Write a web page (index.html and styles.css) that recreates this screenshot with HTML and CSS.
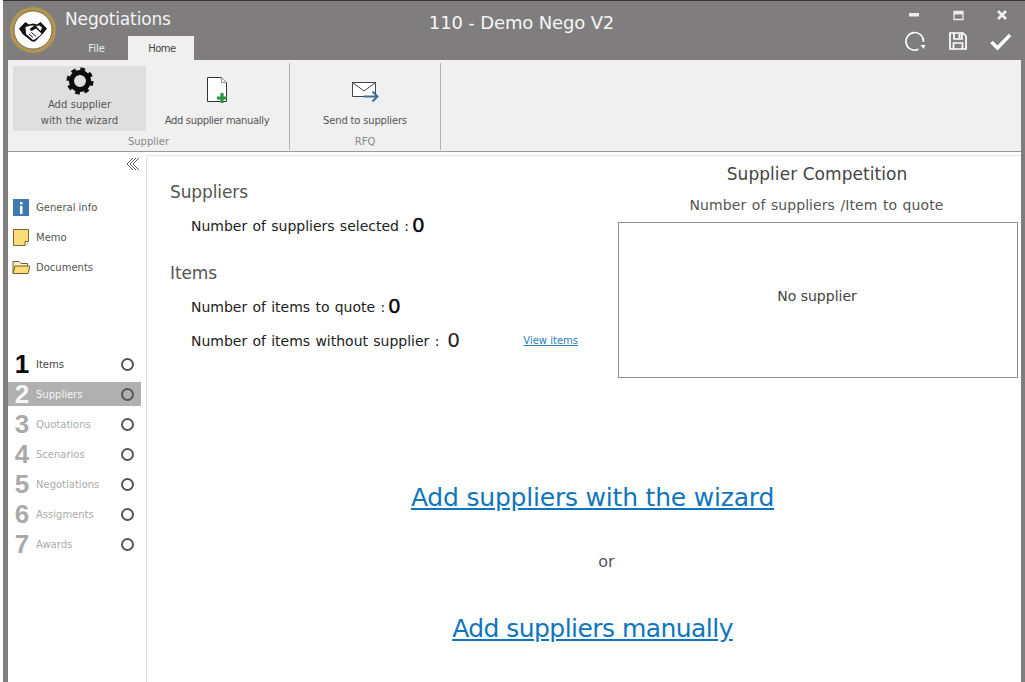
FILE: index.html
```html
<!DOCTYPE html>
<html lang="en">
<head>
<meta charset="utf-8">
<title>Negotiations</title>
<link rel="stylesheet" href="styles.css">
</head>
<body>
<div class="window">
  <header class="titlebar">
    <svg class="logo" width="46" height="46" viewBox="0 0 46 46">
      <circle cx="23" cy="23" r="21" fill="#fff" stroke="#b2964f" stroke-width="4"/>
      <circle cx="23" cy="23" r="19" fill="none" stroke="#4a4538" stroke-width=".7"/>
      <path d="M9 21.500L15.500 15l3.500 2.500 4-1 4 1 3.500-2.500L37 21.500 33.500 26 25 34.500h-3L12.500 27z" fill="#111"/>
      <path d="M15.500 20l5.500-1.500 3.500 0-5 3.500 2 2 4.500-2.500 5.500 5-1.500 2-5.500 4-1.500.500-7-6z" fill="#fff"/>
      <path d="M26 19l3.500-.500 2.500 2-1.500 3.500z" fill="#fff"/>
      <path d="M19 27l4 3.500M21.500 25.500l4.500 4" stroke="#111" stroke-width="1" fill="none"/>
    </svg>
    <div class="brand">
      <div class="app-name">Negotiations</div>
      <nav class="tabs">
        <span class="tab">File</span>
        <span class="tab tab-active">Home</span>
      </nav>
    </div>
    <div class="doc-title">110 - Demo Nego V2</div>
    <div class="controls">
      <div class="control-row">
        <svg width="14" height="14" viewBox="0 0 14 14"><rect x="2" y="5" width="10" height="3.500" fill="#eceaf2"/></svg>
        <svg width="14" height="14" viewBox="0 0 14 14"><path d="M3 3.500h9v8H3z" fill="none" stroke="#eceaf2" stroke-width="1.300"/><rect x="3" y="3" width="9" height="3.500" fill="#eceaf2"/></svg>
        <svg width="14" height="14" viewBox="0 0 14 14"><path d="M3 3l8 8M11 3l-8 8" stroke="#f2f2f2" stroke-width="2.600" fill="none"/></svg>
      </div>
      <div class="control-row action-row">
        <svg width="22" height="22" viewBox="0 0 22 22"><path d="M14.500 19.300A8.800 8.800 0 1 1 19.500 12" fill="none" stroke="#fff" stroke-width="1.600"/><path d="M16.500 15h5l-2 4z" fill="#fff"/></svg>
        <svg width="22" height="22" viewBox="0 0 22 22"><path d="M3 3h13l3 3v13H3z" fill="none" stroke="#fff" stroke-width="1.700"/><path d="M7 3v6h8V3M6.500 19v-6h9v6" fill="none" stroke="#fff" stroke-width="1.700"/><rect x="11.500" y="4" width="2" height="4" fill="#fff"/></svg>
        <svg width="22" height="22" viewBox="0 0 22 22"><path d="M1.500 12l6 6L20 5" fill="none" stroke="#fff" stroke-width="3.400"/></svg>
      </div>
    </div>
  </header>

  <section class="ribbon">
    <div class="group group-supplier">
      <div class="group-buttons">
        <div class="rbtn rbtn-active rbtn-wizard">
          <svg width="28" height="28" viewBox="0 0 28 28">
            <circle cx="14" cy="14" r="8.500" fill="none" stroke="#0c0c0c" stroke-width="5"/>
            <circle cx="14" cy="14" r="11.700" fill="none" stroke="#0c0c0c" stroke-width="3.600" stroke-dasharray="4.600 4.590"/>
          </svg>
          <span>Add supplier<br>with the wizard</span>
        </div>
        <div class="rbtn rbtn-manual">
          <svg width="26" height="30" viewBox="0 0 26 30">
            <path d="M3.500 2.500h14l5 5v19h-19z" fill="#fff" stroke="#333" stroke-width="1"/>
            <path d="M17.500 2.500v5h5" fill="#eee" stroke="#999" stroke-width="1"/>
            <path d="M18 18v10M13 23h10" stroke="#2b9445" stroke-width="3.200"/>
          </svg>
          <span>Add supplier manually</span>
        </div>
      </div>
      <div class="group-label">Supplier</div>
    </div>
    <div class="group group-rfq">
      <div class="group-buttons">
        <div class="rbtn rbtn-send">
          <svg width="30" height="22" viewBox="0 0 30 22">
            <path d="M2.500 1.500h23v14h-23z" fill="#fff" stroke="#444" stroke-width="1"/>
            <path d="M2.500 1.500L14 10 25.500 1.500" fill="none" stroke="#444" stroke-width="1"/>
            <path d="M14 15.500h13M22.500 10.500l5 5-5 5" fill="none" stroke="#3f6f96" stroke-width="2"/>
          </svg>
          <span>Send to suppliers</span>
        </div>
      </div>
      <div class="group-label">RFQ</div>
    </div>
  </section>

  <div class="body">
    <aside class="sidebar">
      <svg class="collapse" width="14" height="14" viewBox="0 0 14 14"><path d="M7 1L1 7l6 6M13 1L7 7l6 6M10 1L4 7l6 6" fill="none" stroke="#555" stroke-width="1"/></svg>
      <ul class="links">
        <li><svg width="18" height="17" viewBox="0 0 18 17"><rect x="1" y="0" width="16" height="17" fill="#3f7bb0"/><rect x="8" y="3" width="2.500" height="2.500" fill="#fff"/><rect x="8" y="7" width="2.500" height="8" fill="#fff"/></svg>General info</li>
        <li><svg width="18" height="17" viewBox="0 0 18 17"><path d="M1.500 .5h15v12l-3.500 4h-11.500z" fill="#fbdc78" stroke="#77663a"/><path d="M13 16.500v-4h3.500" fill="#fff" stroke="#77663a"/></svg><em>Memo</em></li>
        <li><svg width="18" height="17" viewBox="0 0 18 17"><path d="M1 14V2.500h6l2 2h6.500V7" fill="#fff2bf" stroke="#6b5c33"/><path d="M1 14.500L3 7h15l-2 7.500z" fill="#fbdc78" stroke="#6b5c33"/></svg>Documents</li>
      </ul>
      <ol class="steps">
        <li class="step step-done"><b>1</b><span>Items</span><i></i></li>
        <li class="step step-current"><b>2</b><span>Suppliers</span><i></i></li>
        <li class="step"><b>3</b><span>Quotations</span><i></i></li>
        <li class="step"><b>4</b><span>Scenarios</span><i></i></li>
        <li class="step"><b>5</b><span>Negotiations</span><i></i></li>
        <li class="step"><b>6</b><span>Assigments</span><i></i></li>
        <li class="step"><b>7</b><span>Awards</span><i></i></li>
      </ol>
    </aside>
    <main class="content">
      <div class="top">
        <div class="summary">
          <h2>Suppliers</h2>
          <p class="stat">Number of suppliers selected :<strong>0</strong></p>
          <h2 class="h-items">Items</h2>
          <p class="stat">Number of items to quote :<strong>0</strong></p>
          <p class="stat stat-last">Number of items without supplier :<strong class="wide">0</strong><a class="view" href="#">View items</a></p>
        </div>
        <div class="competition">
          <h3>Supplier Competition</h3>
          <div class="sub">Number of suppliers /Item to quote</div>
          <div class="chart">No supplier</div>
        </div>
      </div>
      <div class="cta">
        <a class="cta-wizard" href="#">Add suppliers with the wizard</a>
        <span class="or">or</span>
        <a class="cta-manual" href="#">Add suppliers manually</a>
      </div>
    </main>
  </div>
</div>
</body>
</html>
```

FILE: styles.css
```css
* { box-sizing: border-box; }
html, body { margin: 0; padding: 0; }
body {
  width: 1025px;
  height: 682px;
  overflow: hidden;
  background: #fff;
  font-family: "DejaVu Sans", sans-serif;
  color: #444;
}
.window {
  width: 1022px;
  height: 682px;
  margin-left: 3px;
  padding: 0 4px 0 5px;
  background: #7f7d7e;
  border-top: 1px solid #333;
  display: flex;
  flex-direction: column;
  overflow: hidden;
}
.titlebar {
  height: 59px;
  flex: none;
  margin-left: -5px;
  margin-right: -4px;
  display: flex;
  position: relative;
  color: #fff;
}
.logo { margin: 6px 0 0 7px; flex: none; }
.brand { margin-left: 9px; width: 130px; flex: none; display: flex; flex-direction: column; }
.app-name { font-size: 17px; line-height: 20px; margin-top: 8px; letter-spacing: -0.15px; color: #f4f4f4; }
.tabs { display: flex; margin-top: 7px; height: 24px; }
.tab { width: 63px; text-align: center; font-size: 10px; line-height: 25px; color: #eee; }
.tab-active { width: 66px; padding-left: 2px; background: #f0f0f0; color: #444; letter-spacing: -0.5px; }
.doc-title {
  position: absolute;
  left: 0;
  right: 0;
  top: 10px;
  text-align: center;
  font-size: 18px;
  line-height: 24px;
  color: #f6f6f6;
  letter-spacing: -0.15px;
  padding-left: 15px;
}
.controls { margin-left: auto; margin-right: 13px; display: flex; flex-direction: column; align-items: flex-end; }
.control-row { display: flex; gap: 30px; padding-right: 3px; margin-top: 7px; }
.action-row { margin-top: 8px; gap: 21px; padding-right: 0; }
.ribbon {
  height: 92px;
  flex: none;
  background: #f0f0f0;
  border-bottom: 1px solid #9a9a9a;
  display: flex;
  padding: 3px 0 0 0;
}
.group { display: flex; flex-direction: column; border-right: 1px solid #b4b4b4; height: 87px; }
.group-supplier { width: 282px; }
.group-rfq { width: 151px; }
.group-buttons { display: flex; flex: 1; }
.group-label { height: 19px; text-align: center; font-size: 10px; line-height: 22px; color: #888; }
.rbtn { display: flex; flex-direction: column; align-items: center; justify-content: flex-end; text-align: center; font-size: 10px; line-height: 16px; color: #555; padding-bottom: 2px; }
.rbtn svg { display: block; }
.rbtn-wizard { width: 133px; height: 65px; margin-left: 5px; margin-top: 3px; letter-spacing: 0.05px; }
.rbtn-active { background: #e0dfe0; }
.rbtn-wizard svg { margin-bottom: 2px; }
.rbtn-manual { width: 142px; margin-top: 3px; height: 65px; letter-spacing: -0.35px; }
.rbtn-manual svg { margin-bottom: 8px; margin-right: 1px; }
.rbtn-send { width: 100%; height: 65px; margin-top: 3px; letter-spacing: -0.18px; }
.rbtn-send svg { margin-bottom: 10px; }
.body { flex: 1; display: flex; background: #fff; min-height: 0; }
.sidebar {
  width: 139px;
  flex: none;
  border-right: 1px solid #e2e2e2;
  margin-top: 3px;
  position: relative;
  padding-top: 37px;
}
.collapse { position: absolute; right: 6px; top: 2px; }
.links { list-style: none; margin: 0; padding: 0 0 0 4px; }
.links li { height: 30px; display: flex; align-items: center; gap: 6px; font-size: 10px; color: #555; }
.links em { font-style: normal; }
.steps { list-style: none; margin: 70px 0 0; padding: 0 5px 0 0; }
.step { height: 24px; margin-bottom: 6px; display: flex; align-items: center; color: #aaa; font-size: 10px; }
.step b { width: 28px; text-align: center; font-size: 26px; line-height: 24px; font-weight: 700; color: #aaa; font-family: "Liberation Sans", sans-serif; }
.step span { flex: 1; }
.step i { width: 13px; height: 13px; border: 2px solid #555; border-radius: 50%; margin-right: 7px; }
.step-done b { color: #0a0a0a; }
.step-done span { color: #444; }
.step-current { background: #b0b0b0; }
.step-current b, .step-current span { color: #f6f6f6; }
.content { flex: 1; min-width: 0; margin-top: 3px; border-top: 1px solid #e2e2e2; display: flex; flex-direction: column; }
.top { display: flex; height: 222px; }
.summary { width: 431px; padding-left: 23px; flex: none; }
.summary h2 { margin: 0; font-weight: 400; font-size: 17px; line-height: 22px; padding-top: 25px; color: #555; letter-spacing: -0.1px; height: 47px; }
.summary .h-items { margin-top: 19px; padding-top: 0; height: 22px; }
.stat { margin: 0 0 0 21px; height: 34px; font-size: 14px; line-height: 34px; color: #222; display: flex; align-items: center; word-spacing: 0.8px; }
.summary > h2 + .stat { margin-top: 6px; }
.stat strong { font-size: 20px; line-height: 32px; padding-bottom: 2px; font-weight: 400; color: #000; margin-left: 3px; -webkit-text-stroke: 0.3px #000; }
.stat .wide { margin-left: 8px; color: #222; -webkit-text-stroke: 0; }
.view { margin-left: auto; font-size: 10px; color: #2a7fb5; word-spacing: 0; }
.competition { width: 400px; margin-left: 40px; flex: none; display: flex; flex-direction: column; align-items: center; }
.competition h3 { margin: 6px 0 0; padding-right: 2px; font-weight: 400; font-size: 17px; line-height: 24px; color: #444; letter-spacing: 0.05px; }
.sub { font-size: 14px; line-height: 20px; margin-top: 9px; padding-right: 3px; color: #555; letter-spacing: 0.07px; word-spacing: 1px; }
.chart { width: 400px; height: 156px; margin-top: 7px; padding: 0 2px 8px 0; border: 1px solid #8f8f8f; display: flex; align-items: center; justify-content: center; font-size: 14px; color: #444; }
.cta { flex: 1; display: flex; flex-direction: column; align-items: center; padding-top: 103px; padding-left: 17px; }
.cta a { font-size: 25px; line-height: 34px; color: #0f75bc; }
.cta-wizard { letter-spacing: -0.2px; }
.cta-manual { letter-spacing: -0.55px; }
.or { font-size: 16px; line-height: 24px; margin: 35px 0 38px; padding-left: 28px; color: #555; }
```
